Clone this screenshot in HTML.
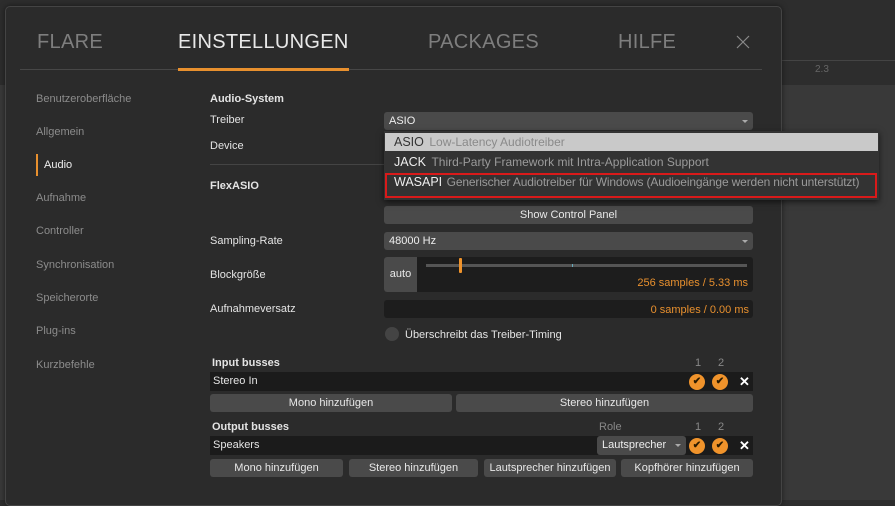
<!DOCTYPE html><html><head><style>
*{margin:0;padding:0;box-sizing:border-box}
body{width:895px;height:500px;overflow:hidden;background:#2d2d2d;font-family:"Liberation Sans",sans-serif;position:relative}
.a{position:absolute;white-space:nowrap}
.tab{font-size:20px;color:#7e7e7e;top:31px;letter-spacing:0.3px}
.side{font-size:11px;color:#8c8c8c;left:36px}
.lab{font-size:11px;color:#e4e4e4;left:210px}
.b{font-weight:bold}
.btn{background:#4a4a4a;border-radius:3px;color:#e8e8e8;font-size:11px;text-align:center;line-height:18px;height:18px}
.dd{background:#4a4a4a;border-radius:3px;color:#eee;font-size:11px;line-height:18px;height:18px;padding-left:5px}
.dd:after{content:"";position:absolute;right:5px;top:8px;border:3px solid transparent;border-top:3px solid #aaa}
.row{background:#1b1b1b;height:19px;color:#e4e4e4;font-size:11px;line-height:19px;padding-left:3px}
.chk{width:16px;height:16px;border-radius:50%;background:#f0932b;color:#2a1a00;font-size:10px;text-align:center;line-height:16px;font-weight:bold}
</style></head><body>
<div class="a" style="left:0;top:85px;width:895px;height:415px;background:#393939"></div>
<div class="a" style="left:782px;top:60px;width:113px;height:1px;background:#444"></div>
<div class="a" style="left:815px;top:64px;font-size:10px;color:#666">2.3</div>
<div class="a" style="left:5px;top:6px;width:777px;height:500px;background:#2b2b2b;border:1px solid #444;border-radius:5px;box-shadow:0 0 6px rgba(0,0,0,.5)"></div>
<div class="a tab" style="left:37px">FLARE</div>
<div class="a tab" style="left:178px;color:#e8e8e8">EINSTELLUNGEN</div>
<div class="a tab" style="left:428px">PACKAGES</div>
<div class="a tab" style="left:618px">HILFE</div>
<svg class="a" style="left:736px;top:35px" width="14" height="14"><path d="M1 1L13 13M13 1L1 13" stroke="#8a8a8a" stroke-width="1.2"/></svg>
<div class="a" style="left:20px;top:69px;width:742px;height:1px;background:#474747"></div>
<div class="a" style="left:178px;top:68px;width:171px;height:3px;background:#e8902e"></div>

<div class="a side" style="top:93px">Benutzeroberfläche</div>
<div class="a side" style="top:126px">Allgemein</div>
<div class="a" style="left:36px;top:154px;width:2px;height:22px;background:#e8902e"></div>
<div class="a side" style="top:159px;left:44px;color:#eee">Audio</div>
<div class="a side" style="top:192px">Aufnahme</div>
<div class="a side" style="top:225px">Controller</div>
<div class="a side" style="top:259px">Synchronisation</div>
<div class="a side" style="top:292px">Speicherorte</div>
<div class="a side" style="top:325px">Plug-ins</div>
<div class="a side" style="top:359px">Kurzbefehle</div>

<div class="a lab b" style="top:93px">Audio-System</div>
<div class="a lab" style="top:114px">Treiber</div>
<div class="a lab" style="top:140px">Device</div>
<div class="a" style="left:210px;top:164px;width:175px;height:1px;background:#444"></div>
<div class="a lab b" style="top:180px">FlexASIO</div>
<div class="a lab" style="top:235px">Sampling-Rate</div>
<div class="a lab" style="top:269px">Blockgröße</div>
<div class="a lab" style="top:303px">Aufnahmeversatz</div>

<div class="a dd" style="left:384px;top:112px;width:369px">ASIO</div>
<div class="a btn" style="left:384px;top:206px;width:369px">Show Control Panel</div>
<div class="a dd" style="left:384px;top:232px;width:369px">48000 Hz</div>
<div class="a" style="left:384px;top:257px;width:369px;height:35px;background:#1d1d1d;border-radius:3px"></div>
<div class="a btn" style="left:384px;top:257px;width:33px;height:35px;line-height:35px;border-radius:3px 0 0 3px">auto</div>
<div class="a" style="left:426px;top:264px;width:321px;height:3px;background:#555"></div>
<div class="a" style="left:572px;top:264px;width:1px;height:3px;background:#6ab"></div>
<div class="a" style="left:459px;top:258px;width:3px;height:15px;background:#f0932b;border-radius:1px"></div>
<div class="a" style="right:147px;top:277px;font-size:11px;color:#e8902e">256 samples / 5.33 ms</div>
<div class="a" style="left:384px;top:300px;width:369px;height:18px;background:#1d1d1d;border-radius:3px"></div>
<div class="a" style="right:146px;top:304px;font-size:11px;color:#e8902e">0 samples / 0.00 ms</div>
<div class="a" style="left:385px;top:327px;width:14px;height:14px;border-radius:50%;background:#444"></div>
<div class="a lab" style="left:405px;top:329px">Überschreibt das Treiber-Timing</div>

<div class="a lab b" style="top:357px;left:212px">Input busses</div>
<div class="a" style="left:695px;top:357px;font-size:11px;color:#888">1</div>
<div class="a" style="left:718px;top:357px;font-size:11px;color:#888">2</div>
<div class="a row" style="left:210px;top:372px;width:543px">Stereo In</div>
<div class="a chk" style="left:689px;top:374px">✔</div>
<div class="a chk" style="left:712px;top:374px">✔</div>
<div class="a" style="left:739px;top:374px;font-size:13px;color:#fff;font-weight:bold">✕</div>
<div class="a btn" style="left:210px;top:394px;width:242px">Mono hinzufügen</div>
<div class="a btn" style="left:456px;top:394px;width:297px">Stereo hinzufügen</div>

<div class="a lab b" style="top:421px;left:212px">Output busses</div>
<div class="a" style="left:599px;top:421px;font-size:11px;color:#888">Role</div>
<div class="a" style="left:695px;top:421px;font-size:11px;color:#888">1</div>
<div class="a" style="left:718px;top:421px;font-size:11px;color:#888">2</div>
<div class="a row" style="left:210px;top:436px;width:543px">Speakers</div>
<div class="a dd" style="left:597px;top:436px;width:89px;height:19px;line-height:19px">Lautsprecher</div>
<div class="a chk" style="left:689px;top:438px">✔</div>
<div class="a chk" style="left:712px;top:438px">✔</div>
<div class="a" style="left:739px;top:438px;font-size:13px;color:#fff;font-weight:bold">✕</div>
<div class="a btn" style="left:210px;top:459px;width:133px">Mono hinzufügen</div>
<div class="a btn" style="left:349px;top:459px;width:129px">Stereo hinzufügen</div>
<div class="a btn" style="left:484px;top:459px;width:132px">Lautsprecher hinzufügen</div>
<div class="a btn" style="left:621px;top:459px;width:132px">Kopfhörer hinzufügen</div>

<div class="a" style="left:384px;top:131px;width:495px;height:69px;background:#333;box-shadow:0 2px 6px rgba(0,0,0,.6)"></div>
<div class="a" style="left:385px;top:133px;width:493px;height:18px;background:#c9c9c9"></div>
<div class="a" style="left:394px;top:135px;font-size:12.5px;color:#333">ASIO <span style="color:#8a8a8a;margin-left:2px;font-size:12px">Low-Latency Audiotreiber</span></div>
<div class="a" style="left:394px;top:155px;font-size:12.5px;color:#eee">JACK <span style="color:#9a9a9a;margin-left:2px;font-size:12px">Third-Party Framework mit Intra-Application Support</span></div>
<div class="a" style="left:385px;top:173px;width:492px;height:25px;border:2px solid #d91a1a"></div>
<div class="a" style="left:394px;top:175px;font-size:12.5px;color:#eee">WASAPI <span style="color:#9a9a9a;margin-left:1px;font-size:12px;letter-spacing:-0.15px">Generischer Audiotreiber für Windows (Audioeingänge werden nicht unterstützt)</span></div>
</body></html>
